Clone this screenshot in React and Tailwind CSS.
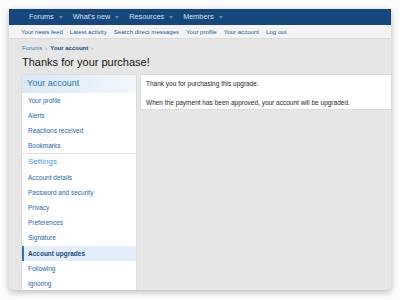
import React from 'react';

const navItems = ['Forums', "What's new", 'Resources', 'Members'];
const subNav = ['Your news feed', 'Latest activity', 'Search direct messages', 'Your profile', 'Your account', 'Log out'];
const accountLinks = ['Your profile', 'Alerts', 'Reactions received', 'Bookmarks'];
const settingsLinks = ['Account details', 'Password and security', 'Privacy', 'Preferences', 'Signature', 'Account upgrades', 'Following', 'Ignoring'];

const Caret = () => (
  <svg width="4" height="3" viewBox="0 0 4 3" className="shrink-0">
    <path d="M0 0h4L2 3z" fill="#6f8db3" />
  </svg>
);

const SideLink = ({ label, active }) => (
  <div
    className={
      active
        ? 'h-[15.1px] flex items-center pl-[4px] border-l-[2px] border-[#2577b1] bg-[#e3eefa] text-[#174a7c] font-bold'
        : 'h-[15.1px] flex items-center pl-[6px] text-[#2a66a0]'
    }
  >
    {label}
  </div>
);

export default function App() {
  return (
    <div className="w-[400px] h-[300px] bg-[#fbfbfb] pt-[9px] pl-[9px] font-['Liberation_Sans',Arial,sans-serif]">
      <div className="w-[382px] h-[281px] overflow-hidden rounded-b-[4px] bg-[#e6e6e6] shadow-[0_2px_6px_rgba(0,0,0,0.28)] flex flex-col">
        {/* Top nav */}
        <div className="h-[16px] shrink-0 bg-[#17477a] flex items-center pl-[20px] gap-[10px] text-[7.3px] text-[#d6e2ef]">
          {navItems.map((n) => (
            <div key={n} className="flex items-center gap-[5px]">
              <span>{n}</span>
              <Caret />
            </div>
          ))}
        </div>

        {/* Sub nav */}
        <div className="h-[14px] shrink-0 bg-[#f4f4f4] border-b border-[#d9d9d9] flex items-center pl-[12px] gap-[7px] text-[6.1px] text-[#1d5a92]">
          {subNav.map((s) => (
            <span key={s}>{s}</span>
          ))}
        </div>

        {/* Body */}
        <div className="flex-1 pl-[13px]">
          <div className="mt-[6px] flex items-center gap-[3px] text-[6px] h-[7px]">
            <span className="text-[#2577b1]">Forums</span>
            <span className="text-[#a0a0a0]">›</span>
            <span className="text-[#174a7c] font-bold">Your account</span>
            <span className="text-[#a0a0a0]">›</span>
          </div>
          <h1 className="mt-[3px] text-[11px] leading-[15px] text-[#141414]">Thanks for your purchase!</h1>

          <div className="mt-[5px] flex gap-[5px] items-start">
            <div className="w-[114px] shrink-0 bg-white shadow-[0_0_1px_rgba(0,0,0,0.25)] text-[6.5px]">
              <div className="h-[18px] flex items-center pl-[5px] text-[9px] text-[#2577b1] bg-gradient-to-r from-[#d9e8f7] to-[#f2f7fc]">
                Your account
              </div>
              {accountLinks.map((l) => (
                <SideLink key={l} label={l} />
              ))}
              <div className="h-[17px] flex items-center pl-[6px] border-t border-[#e2e2e2] text-[8px] text-[#4a9ad6]">
                Settings
              </div>
              {settingsLinks.map((l) => (
                <SideLink key={l} label={l} active={l === 'Account upgrades'} />
              ))}
            </div>

            <div className="flex-1 bg-white shadow-[0_0_1px_rgba(0,0,0,0.25)] pl-[5px] pt-[3.5px] pb-[1.5px] text-[6.5px] leading-[9.5px] text-[#1e1e1e]">
              Thank you for purchasing this upgrade.
              <br />
              <br />
              When the payment has been approved, your account will be upgraded.
            </div>
          </div>
        </div>
      </div>
    </div>
  );
}
